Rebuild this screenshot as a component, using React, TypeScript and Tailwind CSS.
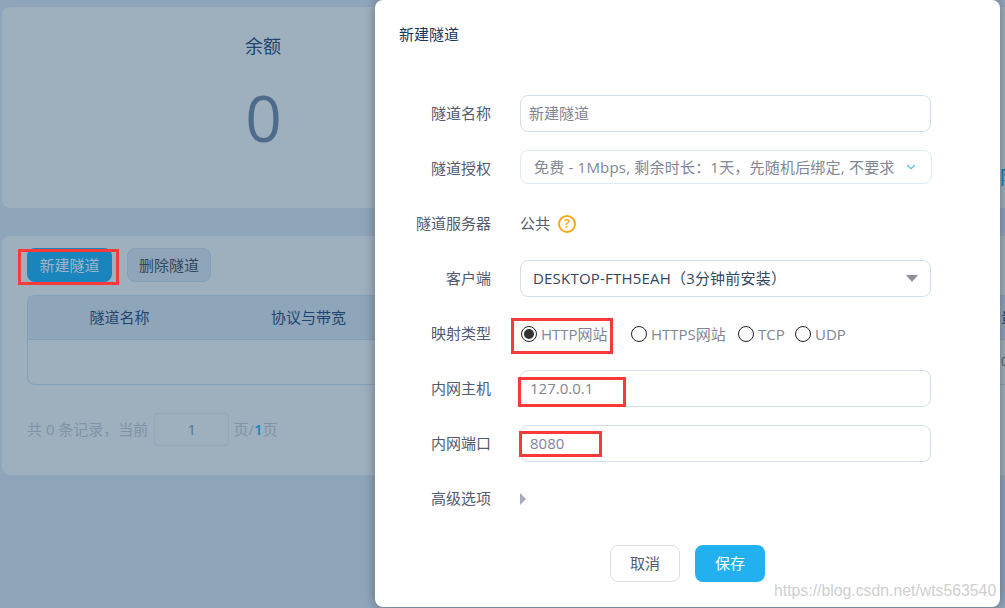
import { ChevronDown } from "lucide-react";

const font = "font-['Open_Sans','Noto_Sans_CJK_SC',sans-serif]";

const Field = ({ label, children }: { label: string; children: React.ReactNode }) => (
  <div className="flex h-[55px] items-center">
    <div className="w-[116px] text-right text-[15px] text-[#515a6e]">{label}</div>
    <div className="ml-[29px] w-[411px]">{children}</div>
  </div>
);

const Radio = ({ label, checked, className }: { label: string; checked?: boolean; className: string }) => (
  <div className={`flex items-center gap-[4px] ${className}`}>
    <span className="flex h-4 w-4 items-center justify-center rounded-full border border-[#222]">
      {checked && <span className="h-[10px] w-[10px] rounded-full bg-[#333]" />}
    </span>
    <span>{label}</span>
  </div>
);

const Mark = ({ className }: { className: string }) => (
  <div className={`pointer-events-none absolute border-[3px] border-[#f93a3a] ${className}`} />
);

const Page = () => (
  <div className="w-[1100px] pl-[2px] pt-[7px]">
    <div className="flex h-[201px] gap-[5px]">
      <div className="flex w-[523px] flex-col items-center rounded-lg bg-[#9eafbe] pt-[28px]">
        <div className="pr-[1px] text-lg leading-[22px] text-[#1f4570]">余额</div>
        <div className="mt-[21px] text-[64px] leading-[80px] text-[#4f6b8c]">0</div>
      </div>
      <div className="flex-1 rounded-lg bg-[#9eafbe] pl-[470px] pt-[156px]">
        <span className="text-lg font-bold text-[#1a84bc]">限</span>
      </div>
    </div>
    <div className="mt-[28px] h-[239px] rounded-lg bg-[#9eafbe] pl-[25px] pt-[12px]">
      <div className="flex gap-[15px]">
        <button className="h-[34px] w-[85px] rounded-lg bg-[#1a84bc] text-[15px] text-[#9eb6c8]">新建隧道</button>
        <button className="h-[34px] w-[84px] rounded-lg border border-[#86a0b5] bg-[#8fa5ba] text-[15px] text-[#33475c]">删除隧道</button>
      </div>
      <div className="mt-[13px] h-[90px] rounded-l-lg border border-[#84a0b8] text-[15px]">
        <div className="flex h-[44px] items-center border-b border-[#84a0b8] bg-[#8fa5ba] text-[#1f4570]">
          <div className="w-[183px] text-center">隧道名称</div>
          <div className="w-[195px] text-center">协议与带宽</div>
          <div className="w-[595px]" />
          <div>量量</div>
        </div>
        <div className="flex h-[44px] items-center pl-[973px] text-xs text-[#4b5b6b]">0</div>
      </div>
      <div className="mt-[28px] flex items-center text-[15px] text-[#7f93a8]">
        <span>共 0 条记录，当前</span>
        <div className="ml-[6px] flex h-[33px] w-[75px] items-center justify-center rounded border border-[#93a8bb] text-[#5f7387]">1</div>
        <span className="ml-[4px]">页/<b className="font-semibold text-[#1a84bc]">1</b>页</span>
      </div>
    </div>
  </div>
);

const Modal = () => (
  <div className="absolute left-[375px] top-0 h-[607px] w-[625px] rounded-lg bg-white shadow-[0_0_12px_rgba(0,0,0,0.35)]">
    <div className="pl-[24px] pt-[24px] text-[15px] leading-[20px] text-[#17375e]">新建隧道</div>
    <div className="mt-[42px]">
      <Field label="隧道名称">
        <div className="flex h-[37px] items-center rounded-lg border border-[#d3dfea] pl-[8px] text-[15px] text-[#808695]">新建隧道</div>
      </Field>
      <Field label="隧道授权">
        <div className="-mt-[3px] flex h-[34px] w-[412px] items-center justify-between rounded-lg border border-[#dcebf2] pl-[13px] pr-[13px] text-[15px] text-[#808695]">
          <span className="whitespace-nowrap tracking-[0.2px]">免费 - 1Mbps, 剩余时长：1天，先随机后绑定, 不要求</span>
          <ChevronDown size={14} className="text-[#5bc0ee]" />
        </div>
      </Field>
      <Field label="隧道服务器">
        <div className="flex items-center gap-[8px] text-[15px] text-[#515a6e]">
          <span>公共</span>
          <span className="flex h-[18px] w-[18px] items-center justify-center rounded-full border-2 border-[#f9a81d] text-[13px] font-semibold leading-none text-[#f9a81d]">?</span>
        </div>
      </Field>
      <Field label="客户端">
        <div className="flex h-[37px] items-center justify-between rounded-lg border border-[#d3dfea] pl-[12px] pr-[12px] text-[15px] text-[#33475c]">
          <span className="tracking-[0.2px]">DESKTOP-FTH5EAH（3分钟前安装）</span>
          <span className="h-0 w-0 border-x-[6px] border-t-[7px] border-x-transparent border-t-[#8a8f99]" />
        </div>
      </Field>
      <Field label="映射类型">
        <div className="mt-[1px] flex items-center text-[15px] text-[#808695]">
          <Radio label="HTTP网站" checked className="w-[111px] pl-[1px]" />
          <Radio label="HTTPS网站" className="w-[107px]" />
          <Radio label="TCP" className="w-[57px]" />
          <Radio label="UDP" className="w-[60px]" />
        </div>
      </Field>
      <Field label="内网主机">
        <div className="flex h-[37px] items-center rounded-lg border border-[#d3dfea] pl-[9px] text-[15px] text-[#808695]">127.0.0.1</div>
      </Field>
      <Field label="内网端口">
        <div className="flex h-[37px] items-center rounded-lg border border-[#d3dfea] pl-[9px] text-[15px] text-[#808695]">8080</div>
      </Field>
      <Field label="高级选项">
        <span className="block h-0 w-0 border-y-[6px] border-l-[6px] border-y-transparent border-l-[#a5abb8]" />
      </Field>
    </div>
    <div className="mt-[19px] flex justify-center gap-[15px]">
      <button className="h-[37px] w-[70px] rounded-lg border border-[#dcdee2] bg-white text-[15px] text-[#515a6e]">取消</button>
      <button className="h-[37px] w-[70px] rounded-lg bg-[#22b1ee] text-[15px] text-white">保存</button>
    </div>
  </div>
);

export default function App() {
  return (
    <div className={`relative h-[608px] w-[1005px] overflow-hidden bg-[#8fa5ba] ${font}`}>
      <Page />
      <Modal />
      <Mark className="left-[18px] top-[249px] h-[36px] w-[101px]" />
      <Mark className="left-[511px] top-[318px] h-[36px] w-[102px]" />
      <Mark className="left-[518px] top-[377px] h-[30px] w-[108px]" />
      <Mark className="left-[519px] top-[431px] h-[26px] w-[83px]" />
      <div className="absolute left-[774px] top-[579px] font-['Liberation_Sans',sans-serif] text-[15.8px] text-[#cfcfcf]">https://blog.csdn.net/wts563540</div>
    </div>
  );
}
